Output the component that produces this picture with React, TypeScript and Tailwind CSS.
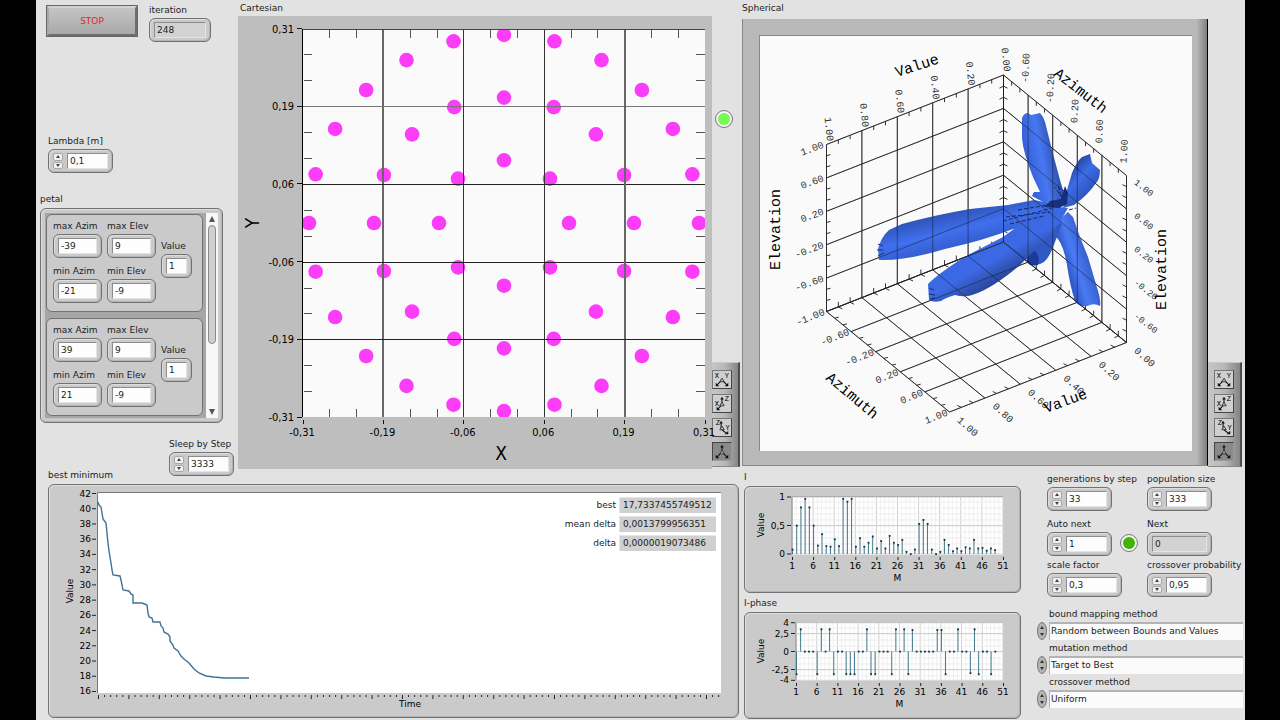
import { ReactNode, useId } from "react";
import clsx from "clsx";

const frame =
  "rounded-md border border-[#727272] bg-[#cacaca] shadow-[inset_1px_1px_0_#dedede,inset_-1px_-1px_0_#b4b4b4]";

const petals = [
  { id: 1, maxAzim: "-39", maxElev: "9", minAzim: "-21", minElev: "-9", value: "1" },
  { id: 2, maxAzim: "39", maxElev: "9", minAzim: "21", minElev: "-9", value: "1" },
];

const methods = [
  { label: "bound mapping method", value: "Random between Bounds and Values" },
  { label: "mutation method", value: "Target to Best" },
  { label: "crossover method", value: "Uniform" },
];

const results = [
  { label: "best", value: "17,7337455749512" },
  { label: "mean delta", value: "0,0013799956351" },
  { label: "delta", value: "0,0000019073486" },
];

const amplitude = [
  0.08, 0.5, 0.82, 0.97, 0.82, 0.5, 0.15, 0.35, 0.14, 0.13, 0.26, 0.14, 0.97, 0.92, 0.97, 0.13, 0.28,
  0.13, 0.2, 0.31, 0.1, 0.23, 0.1, 0.32, 0.2, 0.16, 0.25, 0.04, 0, 0.08, 0.53, 0.6, 0.53, 0.08, 0, 0.04,
  0.25, 0.16, 0.05, 0.1, 0.05, 0.12, 0.1, 0.25, 0.1, 0.11, 0.06, 0.1, 0.07,
];

const phase = [
  -3.14, 3.1, 0, 0, 0, -3.14, 3.1, 0, 3.1, -3.14, 0, 0, -3.14, -3.14, -3.14, 0, 0, 3.1, -3.14, -3.14, 0,
  0, 0, -3.14, 3.1, 0, 3.1, -3.14, 3, 0, 0, 0, 0, 0, 3, 3, -3.14, 0, 0, 3.1, 0, 0, -3, 3.1, -3.14, 0, 0,
  -3.14, 0,
];

const range = (n: number) => Array.from({ length: n }, (_, i) => i);

const Spinner = ({ name }: { name: string }) => (
  <div className="flex h-4 w-[10px] shrink-0 flex-col gap-px">
    {["up", "down"].map((dir) => (
      <button
        key={dir}
        type="button"
        aria-label={`${name} ${dir}`}
        className="flex flex-1 items-center justify-center rounded-[2px] border border-[#a8a8a8] bg-[#f0f0f0]"
      >
        <svg viewBox="0 0 4 3" className="h-[3px] w-1">
          <path d={dir === "up" ? "M0 3L2 0L4 3Z" : "M0 0L2 3L4 0Z"} fill="#444" />
        </svg>
      </button>
    ))}
  </div>
);

const Field = ({
  label,
  value,
  width,
  spinner = false,
  readOnly = false,
}: {
  label: string;
  value: string;
  width: string;
  spinner?: boolean;
  readOnly?: boolean;
}) => {
  const id = useId();
  return (
    <div className="flex flex-col gap-0.5">
      <label htmlFor={id} className="whitespace-nowrap">
        {label}
      </label>
      <div className={clsx("flex h-6 items-center gap-1 px-1", frame, width)}>
        {spinner && <Spinner name={label} />}
        <input
          id={id}
          type="text"
          defaultValue={value}
          readOnly={readOnly}
          className={clsx(
            "h-4 w-full min-w-0 border border-t-[#8c8c8c] border-r-[#e4e4e4] border-b-[#e4e4e4] border-l-[#8c8c8c] px-0.5 outline-none",
            readOnly ? "bg-[#d2d2d2]" : "bg-[#fdfdfd]"
          )}
        />
      </div>
    </div>
  );
};

const Led = ({ color }: { color: string }) => (
  <div className="flex size-[18px] items-center justify-center rounded-full border border-[#777] bg-[#f4f4f4]">
    <div className={clsx("size-3 rounded-full", color)} />
  </div>
);

const views = [
  { name: "XY projection", letters: [["X", 2, 8], ["Y", 13, 8]], arrows: "M9 11L4 16M11 11L16 16", heads: "M3 17v-4l4 4zM17 17v-4l-4 4z" },
  { name: "XZ projection", letters: [["X", 2, 12], ["Z", 13, 7]], arrows: "M10 10V4M9 12L5 16", heads: "M10 2l-2 3h4zM4 17v-4l4 4z" },
  { name: "YZ projection", letters: [["Z", 3, 7], ["Y", 14, 12]], arrows: "M9 10V4M10 12L15 16", heads: "M9 2l-2 3h4zM17 17v-4l-4 4z" },
  { name: "Perspective", letters: [], arrows: "M10 10V4M9 11L4 16M11 11L16 16", heads: "M10 2l-2 3h4zM3 17v-4l4 4zM17 17v-4l-4 4z" },
] as { name: string; letters: [string, number, number][]; arrows: string; heads: string }[];

const ViewPalette = ({ className }: { className: string }) => (
  <div
    className={clsx(
      "flex h-[105px] flex-col gap-[5px] border-t border-r-2 border-b border-t-[#c9c9c9] border-r-[#4c4c4c] border-b-[#888] bg-linear-to-r from-[#c6c6c6] via-[#b8b8b8] to-[#858585] pt-[7px]",
      className
    )}
  >
    {views.map((view, i) => (
      <button
        key={view.name}
        type="button"
        aria-label={view.name}
        className={clsx(
          "h-[19px] w-5 border",
          i === 3
            ? "border-t-[#444] border-r-[#999] border-b-[#999] border-l-[#444] bg-[#8a8a8a]"
            : "border-t-[#777] border-r-[#444] border-b-[#444] border-l-[#777] bg-[#cfcfcf]"
        )}
      >
        <svg viewBox="0 0 20 19" className="size-full">
          <path d={view.arrows} stroke="#111" strokeWidth="1.2" fill="none" />
          <path d={view.heads} fill="#111" />
          <path d="M10 8l-2.500 4h5z" stroke="#333" fill="#b9b9a8" />
          {view.letters.map(([letter, x, y]) => (
            <text key={letter} x={x} y={y} className="font-['Liberation_Mono',monospace] text-[8px]">
              {letter}
            </text>
          ))}
        </svg>
      </button>
    ))}
  </div>
);

const CartesianPlot = () => {
  const left = 303;
  const top = 29;
  const stepX = 80.4;
  const stepY = 77.7;
  const labels = ["-0,31", "-0,19", "-0,06", "0,06", "0,19", "0,31"];
  const dots = [1, 2, 3].flatMap((ring) =>
    range(ring * 8).map((i) => {
      const a = (i * Math.PI) / (ring * 4);
      return [504 + 65 * ring * Math.cos(a), 223 + 62.7 * ring * Math.sin(a)];
    })
  );
  return (
    <svg
      viewBox="238 16 474 453"
      className="relative z-10 block w-full overflow-visible bg-[#bebebe] font-['DejaVu_Sans_Condensed','DejaVu_Sans',sans-serif] text-[11px]"
    >
      <clipPath id="cartesian-area">
        <rect x={left} y={top} width="402" height="388" />
      </clipPath>
      <rect x={left} y={top} width="402" height="388" fill="#fafafa" />
      <g clipPath="url(#cartesian-area)" fill="#fb3cf8">
        {dots.map(([x, y], i) => (
          <circle key={i} cx={x} cy={y} r="7.3" />
        ))}
      </g>
      <g stroke="#222" shapeRendering="crispEdges">
        {range(16).map((i) => {
          const x = left + (i * stepX) / 3;
          const y = top + (i * stepY) / 3;
          if (i % 3 === 0) return null;
          return (
            <path
              key={i}
              d={`M${x} 30v8M${x} 409v8M304 ${y}h8M696 ${y}h9`}
              stroke="#555"
            />
          );
        })}
        {[1, 2, 3, 4].map((i) => (
          <g key={i}>
            <path
              d={`M${left + i * stepX} 29V417`}
              strokeWidth={i % 3 === 1 ? 2 : 1}
              stroke={i % 3 === 1 ? "#666" : "#333"}
            />
            <path d={`M303 ${top + i * stepY}H705`} stroke={i === 1 ? "#777" : "#222"} />
          </g>
        ))}
        <path d="M302 29H705" stroke="#444" />
        <path d="M302.500 29V417" stroke="#000" />
        {labels.map((label, i) => (
          <path key={label} d={`M${left + i * stepX} 420v4M297 ${417 - i * stepY}h5`} stroke="#111" />
        ))}
      </g>
      {labels.map((label, i) => (
        <g key={label}>
          <text x={left - 1 + i * stepX} y="436" textAnchor="middle">
            {label}
          </text>
          <text x="294" y={421 - i * stepY} textAnchor="end">
            {label}
          </text>
        </g>
      ))}
      <text x="501" y="460" textAnchor="middle" className="text-[19px]">
        X
      </text>
      <text transform="rotate(-90 259 223)" x="259" y="223" textAnchor="middle" className="text-[19px]">
        Y
      </text>
    </svg>
  );
};

type Pt = [number, number];
const lerp = (a: Pt, b: Pt, t: number): Pt => [a[0] + (b[0] - a[0]) * t, a[1] + (b[1] - a[1]) * t];

// corners of the plot box
const A: Pt = [826.5, 144.5];
const B: Pt = [1003.5, 75];
const C: Pt = [1126.5, 175.5];
const D: Pt = [826.5, 311.5];
const E: Pt = [1003.5, 242];
const F: Pt = [1126.5, 342.5];
const G: Pt = [949.5, 412];

const line = (a: Pt, b: Pt) => `M${a[0]} ${a[1]}L${b[0]} ${b[1]}`;

const gridPath = [0, 0.2, 0.4, 0.6, 0.8, 1]
  .map((t) =>
    [
      line(lerp(A, B, t), lerp(D, E, t)),
      line(lerp(A, D, t), lerp(B, E, t)),
      line(lerp(B, C, t), lerp(E, F, t)),
      line(lerp(B, E, t), lerp(C, F, t)),
      line(lerp(D, E, t), lerp(G, F, t)),
      line(lerp(D, G, t), lerp(E, F, t)),
    ].join("")
  )
  .join("");

const tickPath = range(16)
  .filter((i) => i % 3 !== 0)
  .map((i) => {
    const t = i / 15;
    const at = (a: Pt, b: Pt, dx: number, dy: number) => {
      const [x, y] = lerp(a, b, t);
      return `M${x} ${y}l${dx} ${dy}`;
    };
    return [
      at(A, B, 0, 4),
      at(B, C, 0, 4),
      at(A, D, 4, -1),
      at(B, E, -4, 2),
      at(B, E, 4, 2),
      at(C, F, -4, -2),
      at(D, E, 0, -5),
      at(D, E, 4, 2),
      at(E, F, 0, -5),
      at(E, F, -4, 2),
      at(D, G, 4, -1),
      at(G, F, -4, -2),
    ].join("");
  })
  .join("");

const valueTicks = ["1.00", "0.80", "0.60", "0.40", "0.20", "0.00"];
const angleTicks = ["-1.00", "-0.60", "-0.20", "0.20", "0.60", "1.00"];

const SphericalPlot = () => (
  <svg
    viewBox="760 36 432 415"
    className="block w-full border-t border-l border-[#888] bg-[#fafafa] font-['Liberation_Mono',monospace] text-[10px]"
  >
    <defs>
      <linearGradient id="lobe-left" gradientUnits="userSpaceOnUse" x1="940" y1="212" x2="950" y2="254">
        <stop offset="0" stopColor="#2c50b4" />
        <stop offset="0.5" stopColor="#4070ee" />
        <stop offset="1" stopColor="#3057c4" />
      </linearGradient>
      <linearGradient id="lobe-front" gradientUnits="userSpaceOnUse" x1="970" y1="250" x2="992" y2="288">
        <stop offset="0" stopColor="#3a68e2" />
        <stop offset="0.45" stopColor="#3c6ae6" />
        <stop offset="1" stopColor="#274291" />
      </linearGradient>
      <linearGradient id="lobe-top" gradientUnits="userSpaceOnUse" x1="1024" y1="152" x2="1056" y2="146">
        <stop offset="0" stopColor="#335fd6" />
        <stop offset="0.5" stopColor="#4777f2" />
        <stop offset="1" stopColor="#2b4da8" />
      </linearGradient>
      <linearGradient id="lobe-right" gradientUnits="userSpaceOnUse" x1="1072" y1="165" x2="1098" y2="190">
        <stop offset="0" stopColor="#27459a" />
        <stop offset="0.4" stopColor="#3c6ce8" />
        <stop offset="1" stopColor="#2c4fae" />
      </linearGradient>
      <linearGradient id="lobe-bottom" gradientUnits="userSpaceOnUse" x1="1066" y1="264" x2="1092" y2="256">
        <stop offset="0" stopColor="#3159c8" />
        <stop offset="0.35" stopColor="#4a7bf4" />
        <stop offset="1" stopColor="#3057c2" />
      </linearGradient>
    </defs>
    <path d={gridPath} stroke="#444" fill="none" />
    <path d={tickPath} stroke="#333" fill="none" />
    <path
      fill="url(#lobe-top)"
      d="M1022 118Q1024 113 1028 113L1031 115Q1036 114 1040 113Q1043 116 1045 122L1052 150L1060 180L1066 200L1045 203L1032 196L1034 192L1040 192L1033 177Q1023 152 1022 138Z"
    />
    <path
      fill="url(#lobe-bottom)"
      d="M1055 236L1057 222L1068 212L1073 217Q1076 226 1080 237L1088 257L1098 291Q1101 300 1100 306Q1095 303 1090 305Q1086 307 1083 306Q1078 306 1075 301Q1070 286 1067 265Q1063 242 1055 236Z"
    />
    <path fill="#3159c6" d="M1026 258L1030 240L1050 218L1062 224L1055 242Q1050 257 1044 262Q1037 267 1028 263Z" />
    <path fill="#1c3a9c" d="M1027 258Q1030 248 1036 252L1039 258L1038 265Q1030 267 1027 262Z" />
    <path
      fill="url(#lobe-left)"
      d="M879 260L878 249Q881 237 889 230L902 224Q935 215 970 209L1008 205L1034 200L1060 205L1058 222L1013 229Q985 240 945 249Q905 261 879 260Z"
    />
    <path
      fill="url(#lobe-front)"
      d="M929 300L928 284Q940 272 968 255L1003 237L1030 217L1050 206L1068 208L1060 222Q1052 232 1040 245L1020 265Q994 287 975 294Q966 298 955 295Q945 298 941 301Q933 303 929 300Z"
    />
    <path
      fill="url(#lobe-right)"
      d="M1063 208L1067 190L1072 173Q1077 161 1082 157L1090 154L1092 163L1100 170Q1100 179 1096 183Q1088 195 1074 205Z"
    />
    <path fill="#182f7c" d="M1044 207L1050 201L1061 199L1065 186L1068 193L1067 204L1059 208Z" />
    <path
      d="M1003 221L1052 208M1006 217L1050 212M1018 210L1048 205M1061 196L1058 184M1063 198L1054 187M1069 210L1076 208M1010 224L1044 216"
      stroke="#16265e"
      strokeDasharray="4 2"
      fill="none"
    />
    <path d="M878 244l5 2M877 250l6 0M878 256l6-3M929 288l5 2M929 294l6 1M930 299l5-1" stroke="#142c78" fill="none" />
    <path d={gridPath} stroke="#111" opacity="0.45" fill="none" />
    {valueTicks.map((label, i) => {
      const [x, y] = lerp(A, B, i / 5);
      const [u, v] = lerp(G, F, i / 5);
      return (
        <g key={label} fill="#333">
          <text transform={`translate(${x - 2} ${y - 27}) rotate(84)`}>{label}</text>
          <text transform={`translate(${u + 7} ${v + 9}) rotate(42)`}>{label}</text>
        </g>
      );
    })}
    {angleTicks.map((label, i) => {
      const [x, y] = lerp(D, A, i / 5);
      const [u, v] = lerp(D, G, i / 5);
      const [p, q] = lerp(B, C, i / 5);
      const [r, s] = lerp(F, C, i / 5);
      return (
        <g key={label} fill="#333">
          {i > 0 && (
            <text textAnchor="end" transform={`translate(${x - 2} ${y + 3}) rotate(-20)`}>
              {label}
            </text>
          )}
          <text textAnchor="end" transform={`translate(${u - 1} ${v + 3}) rotate(-22)`}>
            {label}
          </text>
          {i > 0 && <text transform={`translate(${p} ${q - 12}) rotate(-87)`}>{label}</text>}
          {i > 0 && (
            <text className="text-[9px]" transform={`translate(${r + 7} ${s + 8}) rotate(38)`}>
              {label}
            </text>
          )}
        </g>
      );
    })}
    <g className="text-[15px]">
      <text transform="translate(897 77) rotate(-18)">Value</text>
      <text transform="translate(1053 75) rotate(38)">Azimuth</text>
      <text transform="translate(780 270) rotate(-90)">Elevation</text>
      <text transform="translate(825 379) rotate(40)">Azimuth</text>
      <text transform="translate(1046 413) rotate(-20)">Value</text>
      <text transform="translate(1166 310) rotate(-90)">Elevation</text>
    </g>
  </svg>
);

const MinimumChart = () => (
  <svg viewBox="49 485 689 232" className="block w-full">
    <rect x="97" y="492" width="624" height="201" fill="#fff" />
    <path d="M97.500 693V492.500H721" stroke="#777" fill="none" />
    {range(14).map((i) => {
      const y = 493.5 + i * 15.23;
      return (
        <g key={i}>
          <path d={`M92 ${y}h4`} stroke="#222" />
          <text x="91" y={y + 3} textAnchor="end">
            {42 - i * 2}
          </text>
        </g>
      );
    })}
    {range(103).map((i) => (
      <path key={i} d={`M${98.5 + i * 6.08} 695v${i % 5 ? 2 : 4}`} stroke="#222" />
    ))}
    <polyline
      fill="none"
      stroke="#3f7296"
      strokeWidth="1.4"
      points="98,502 99,505 101,507 102,513 103,519 106,523 107,533 108,543 109,551 111,563 112,570 113,575 120,576 121,580 123,590 129,591 131,594 133,595 133,603 142,603 147,605 148,613 149,617 152,618 153,622 160,622 161,626 163,628 164,632 168,634 170,637 170,641 173,645 174,648 178,651 181,656 184,659 189,663 194,669 199,673 206,676 214,677 224,678 249,678"
    />
    <text x="410" y="707" textAnchor="middle">
      Time
    </text>
    <text transform="rotate(-90 73 591)" x="73" y="591" textAnchor="middle">
      Value
    </text>
  </svg>
);

const StemChart = ({
  data,
  viewBox,
  left,
  top,
  zero,
  scale,
  ticks,
}: {
  data: number[];
  viewBox: string;
  left: number;
  top: number;
  zero: number;
  scale: number;
  ticks: { label: string; value: number }[];
}) => {
  const step = (1003 - left) / 50;
  const bottom = top + 58;
  return (
    <svg viewBox={viewBox} className="block w-full">
      <rect x={left} y={top} width={1003 - left} height="59" fill="#fff" />
      {range(51).map((i) => (
        <path
          key={i}
          d={`M${left + i * step} ${top}v59`}
          stroke={i % 5 ? "#f0f0f0" : "#cfcfcf"}
        />
      ))}
      {range(9).map((i) => (
        <path key={i} d={`M${left} ${top + 6 + i * 6}H1003`} stroke="#ededed" />
      ))}
      <path d={`M${left} ${bottom + 1}V${top + 0.5}H1003`} stroke="#888" fill="none" />
      {ticks.map(({ label, value }) => {
        const y = zero - value * scale;
        return (
          <g key={label}>
            <path d={`M${left - 5} ${y}h4`} stroke="#222" />
            <path d={`M${left} ${y}H1003`} stroke="#d0d0d0" />
            <text x={left - 7} y={y + 3} textAnchor="end">
              {label}
            </text>
          </g>
        );
      })}
      {data.map((value, i) => {
        const x = left + 0.5 + i * step;
        const y = zero - value * scale;
        return (
          <g key={i}>
            <path d={`M${x} ${zero}V${y}`} stroke="#44788c" />
            <rect x={x - 0.8} y={y - 0.8} width="1.8" height="1.8" fill="#16303f" />
          </g>
        );
      })}
      {range(11).map((i) => (
        <g key={i}>
          <path d={`M${left + 0.5 + i * 5 * step} ${bottom + 3}v3`} stroke="#222" />
          <text x={left + i * 5 * step} y={bottom + 15} textAnchor="middle">
            {1 + i * 5}
          </text>
        </g>
      ))}
      <text x={(left + 1003) / 2} y={bottom + 27} textAnchor="middle">
        M
      </text>
      <text transform={`rotate(-90 764 ${top + 29})`} x="764" y={top + 29} textAnchor="middle">
        Value
      </text>
    </svg>
  );
};

const Panel = ({ className, children }: { className?: string; children: ReactNode }) => (
  <div className={clsx(frame, className)}>{children}</div>
);

const PetalCell = ({ petal }: { petal: (typeof petals)[number] }) => (
  <div className="flex h-[98px] gap-[5px] rounded-md border border-[#727272] bg-[#cacaca] pt-[5px] pl-1.5">
    <div className="flex flex-col gap-[7px]">
      <Field label="max Azim" value={petal.maxAzim} width="w-[49px]" />
      <Field label="min Azim" value={petal.minAzim} width="w-[49px]" />
    </div>
    <div className="flex flex-col gap-[7px]">
      <Field label="max Elev" value={petal.maxElev} width="w-[49px]" />
      <Field label="min Elev" value={petal.minElev} width="w-[49px]" />
    </div>
    <div className="pt-5">
      <Field label="Value" value={petal.value} width="w-[31px]" />
    </div>
  </div>
);

const SideControls = () => (
  <div className="flex w-[202px] shrink-0 flex-col">
    <div className="flex items-start gap-3 pt-1 pl-[11px]">
      <button
        type="button"
        className="mt-0.5 h-[30px] w-[90px] border-2 border-t-[#d2d2d2] border-r-[#6e6e6e] border-b-[#6e6e6e] border-l-[#a8a8a8] bg-linear-to-b from-[#c4c4c4] to-[#a9a9a9] text-[#e8202a] shadow-[0_0_0_1px_#666]"
      >
        STOP
      </button>
      <Field label="iteration" value="248" width="w-[62px]" readOnly />
    </div>
    <div className="mt-[93px] pl-3">
      <Field label="Lambda [m]" value="0,1" width="w-[65px]" spinner />
    </div>
    <div className="mt-5 pl-1">petal</div>
    <Panel className="mt-[3px] ml-1 flex h-[215px] w-[183px] p-1">
      <div className="flex flex-1 flex-col gap-1.5 bg-[#a6a6a6] pt-px pr-[3px] pl-px">
        {petals.map((petal) => (
          <PetalCell key={petal.id} petal={petal} />
        ))}
      </div>
      <div className="flex w-3 flex-col items-center justify-between bg-[#f7f7f7] py-0.5">
        <button type="button" aria-label="scroll up">
          <svg viewBox="0 0 8 8" className="size-2">
            <path d="M1 7L4 1L7 7Z" fill="#555" />
          </svg>
        </button>
        <div className="mt-0.5 mb-auto h-[119px] w-2 rounded-full border border-[#8a8a8a] bg-[#cfcfcf]" />
        <button type="button" aria-label="scroll down">
          <svg viewBox="0 0 8 8" className="size-2">
            <path d="M1 1L4 7L7 1Z" fill="#555" />
          </svg>
        </button>
      </div>
    </Panel>
    <div className="mt-[15px] -mb-2 self-end pr-1">
      <Field label="Sleep by Step" value="3333" width="w-[65px]" spinner />
    </div>
  </div>
);

const SolverSettings = () => (
  <div className="w-52 shrink-0 pt-1">
    <div className="grid grid-cols-[100px_1fr] gap-y-[7px] pl-2.5">
      <Field label="generations by step" value="33" width="w-[65px]" spinner />
      <Field label="population size" value="333" width="w-[65px]" spinner />
      <div className="flex items-end gap-2">
        <Field label="Auto next" value="1" width="w-[65px]" spinner />
        <div className="pb-1">
          <Led color="bg-[#43b303]" />
        </div>
      </div>
      <Field label="Next" value="0" width="w-[65px]" readOnly />
      <div className="-mt-1">
        <Field label="scale factor" value="0,3" width="w-[75px]" spinner />
      </div>
      <div className="-mt-1">
        <Field label="crossover probability" value="0,95" width="w-[65px]" spinner />
      </div>
    </div>
    <div className="mt-[11px] flex flex-col gap-0.5">
      {methods.map(({ label, value }) => (
        <div key={label} className="flex items-end gap-0.5">
          <svg viewBox="0 0 10 18" className="h-[18px] w-2.5 shrink-0">
            <ellipse cx="5" cy="9" rx="4.500" ry="8.500" fill="#b5b5b5" stroke="#777" />
            <path d="M3 7L5 4L7 7ZM3 11L5 14L7 11Z" fill="#333" />
          </svg>
          <label className="flex flex-1 flex-col gap-0.5 pr-0.5">
            {label}
            <select className="h-[18px] w-full appearance-none border-t-2 border-l border-[#b4b4b4] bg-[#fbfbfb] pb-0.5 pl-px outline-none">
              <option>{value}</option>
            </select>
          </label>
        </div>
      ))}
    </div>
  </div>
);

const App = () => (
  <div className="min-h-screen bg-black pr-[35px] pl-9 font-['DejaVu_Sans',sans-serif] text-[9px] leading-3 text-[#1c1c1c]">
    <main className="min-h-screen bg-[#e2e2e2]">
      <section className="flex">
        <SideControls />
        <div className="min-w-0 flex-[474]">
          <h2 className="h-4 pt-0.5 pl-0.5">Cartesian</h2>
          <CartesianPlot />
        </div>
        <div className="flex w-[30px] shrink-0 flex-col justify-between pb-0.5">
          <div className="pt-[110px] pl-[3px]">
            <Led color="bg-[#74fb52]" />
          </div>
          <ViewPalette className="w-7" />
        </div>
        <div className="min-w-0 flex-[466]">
          <h2 className="h-[19px] pt-0.5">Spherical</h2>
          <div className="flex">
            <div className="min-w-0 flex-1 border-b border-l border-[#888] bg-[#b9b9b9] pt-4 pb-[14px] pl-4">
              <SphericalPlot />
            </div>
            <div className="w-4 border-r border-b border-r-black border-b-[#888] bg-linear-to-r from-[#b9b9b9] from-30% to-[#808080]" />
          </div>
        </div>
        <div className="flex w-[37px] shrink-0 flex-col justify-end pb-0.5">
          <ViewPalette className="w-[34px] pl-1.5" />
        </div>
      </section>
      <section className="flex pl-3">
        <div className="min-w-0 flex-[691]">
          <h2 className="mb-[3px]">best minimum</h2>
          <Panel className="relative">
            <MinimumChart />
            <dl className="absolute top-3 right-[22px] flex flex-col gap-[3px]">
              {results.map(({ label, value }) => (
                <div key={label} className="flex items-center justify-end gap-[3px]">
                  <dt>{label}</dt>
                  <dd className="h-4 w-[97px] border-t border-l border-[#e6e6e6] bg-[#d0d0d0] pt-px pl-[3px]">
                    {value}
                  </dd>
                </div>
              ))}
            </dl>
          </Panel>
        </div>
        <div className="mr-4 ml-[5px] min-w-0 flex-[277] pt-0.5">
          <h2 className="mb-[3px]">I</h2>
          <Panel>
            <StemChart
              data={amplitude}
              viewBox="745 487 275 105"
              left={792}
              top={496}
              zero={554}
              scale={57}
              ticks={[
                { label: "1", value: 1 },
                { label: "0,5", value: 0.5 },
                { label: "0", value: 0 },
              ]}
            />
          </Panel>
          <h2 className="mt-1 mb-[3px]">I-phase</h2>
          <Panel>
            <StemChart
              data={phase}
              viewBox="745 613 275 105"
              left={796}
              top={622}
              zero={651.5}
              scale={7.2}
              ticks={[
                { label: "4", value: 4 },
                { label: "2,5", value: 2.5 },
                { label: "0", value: 0 },
                { label: "-2,5", value: -2.5 },
                { label: "-4", value: -4 },
              ]}
            />
          </Panel>
        </div>
        <SolverSettings />
      </section>
    </main>
  </div>
);

export default App;
